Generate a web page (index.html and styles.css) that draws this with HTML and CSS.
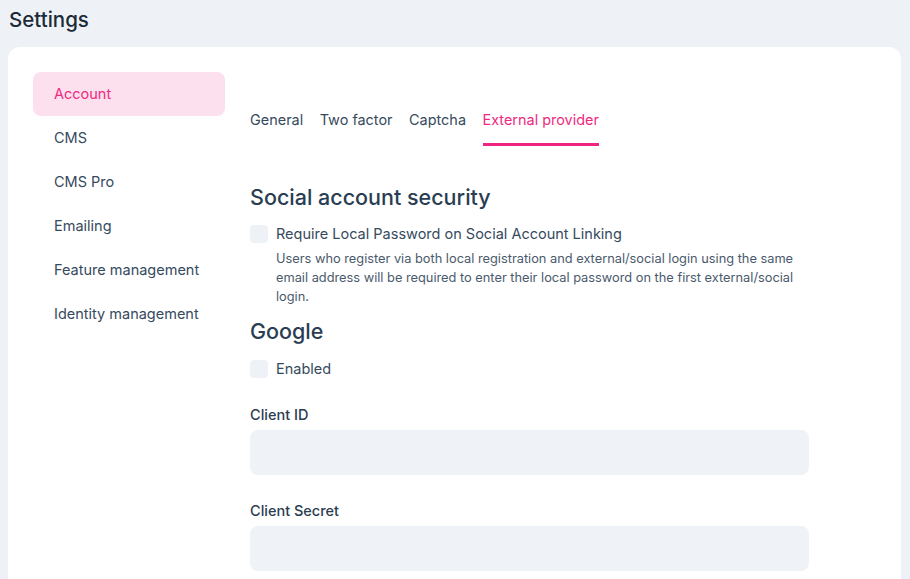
FILE: index.html
```html
<!DOCTYPE html>
<html>
<head>
<meta charset="utf-8">
<link rel="stylesheet" href="styles.css">
</head>
<body>
<h1 class="page-title">Settings</h1>
<div class="card">
  <nav class="sidebar">
    <div class="side-item active">Account</div>
    <div class="side-item">CMS</div>
    <div class="side-item">CMS Pro</div>
    <div class="side-item">Emailing</div>
    <div class="side-item">Feature management</div>
    <div class="side-item">Identity management</div>
  </nav>
  <main class="content">
    <div class="tabs">
      <div class="tab">General</div>
      <div class="tab">Two factor</div>
      <div class="tab">Captcha</div>
      <div class="tab active">External provider</div>
    </div>
    <h2 class="section-title first">Social account security</h2>
    <label class="check-row">
      <span class="checkbox"></span>
      <span class="check-label">Require Local Password on Social Account Linking</span>
    </label>
    <p class="help">Users who register via both local registration and external/social login using the same email address will be required to enter their local password on the first external/social login.</p>
    <h2 class="section-title google">Google</h2>
    <label class="check-row enabled">
      <span class="checkbox"></span>
      <span class="check-label">Enabled</span>
    </label>
    <div class="field first-field">
      <div class="field-label">Client ID</div>
      <div class="input"></div>
    </div>
    <div class="field">
      <div class="field-label">Client Secret</div>
      <div class="input"></div>
    </div>
  </main>
</div>
</body>
</html>
```

FILE: styles.css
```css
* { box-sizing: border-box; }
html, body { margin: 0; padding: 0; }
body {
  background: #eef2f6;
  font-family: Inter, "Noto Sans", sans-serif;
  color: #364a5e;
  height: 579px;
  overflow: hidden;
}
.page-title {
  margin: 0;
  padding: 7px 0 0 9px;
  height: 47px;
  font-size: 20.5px;
  line-height: 26px;
  font-weight: 500;
  color: #1c2b3a;
}
.card {
  margin-left: 8px;
  width: 893px;
  height: 560px;
  background: #fff;
  border-radius: 12px;
  padding: 25px 0 0 25px;
  display: flex;
  gap: 25px;
}
.sidebar {
  width: 192px;
  flex: none;
  display: flex;
  flex-direction: column;
}
.side-item {
  height: 44px;
  line-height: 44px;
  padding-left: 21px;
  font-size: 14.5px;
  color: #364a5e;
  border-radius: 8px;
}
.side-item.active {
  background: #fde0ee;
  color: #ee2a7f;
}
.content {
  flex: 1;
  padding-top: 38px;
}
.tabs {
  display: flex;
  gap: 16.5px;
}
.tab {
  font-size: 14.45px;
  line-height: 20px;
  padding-bottom: 13px;
  border-bottom: 3px solid transparent;
  color: #364a5e;
}
.tab.active {
  color: #ee2a7f;
  border-bottom-color: #f0247f;
}
.section-title {
  margin: 0;
  font-size: 21.5px;
  line-height: 28px;
  font-weight: 500;
  color: #2a3d52;
}
.section-title.first { margin-top: 37px; }
.section-title.google { margin-top: 11px; }
.check-row {
  display: flex;
  align-items: center;
  gap: 8px;
  margin-top: 14px;
  height: 18px;
}
.check-row.enabled { margin-top: 15px; }
.checkbox {
  width: 18px;
  height: 18px;
  border-radius: 4px;
  background: #eef2f6;
  flex: none;
}
.check-label {
  font-size: 14.5px;
  line-height: 18px;
  color: #364a5e;
}
.help {
  margin: 6px 0 0 26px;
  width: 522px;
  font-size: 12.8px;
  line-height: 19px;
  color: #4a5a6c;
}
.field { margin-top: 26px; width: 559px; }
.field.first-field { margin-top: 27px; }
.field-label {
  font-size: 14.5px;
  line-height: 20px;
  font-weight: 500;
  color: #2a3d52;
}
.input {
  margin-top: 5px;
  height: 45px;
  border-radius: 8px;
  background: #eff2f6;
}
```
